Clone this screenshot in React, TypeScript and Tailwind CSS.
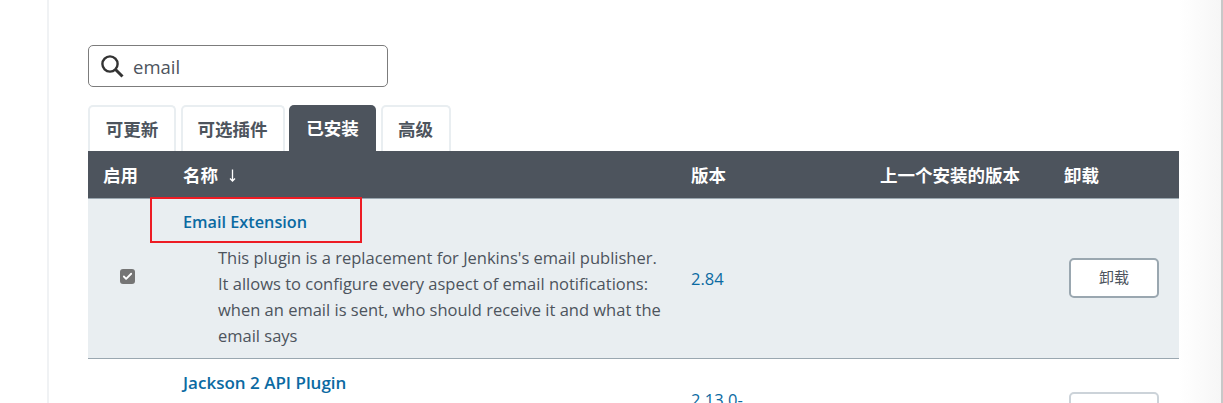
import { Check } from "lucide-react";

const tabs = [
  { label: "可更新", width: "w-[88px]" },
  { label: "可选插件", width: "w-[104px]" },
  { label: "已安装", width: "w-[87px]", active: true },
  { label: "高级", width: "w-[70px]" },
];

const row = "grid grid-cols-[80px_508px_189px_184px_130px]";
const font = "font-['Open_Sans','Noto_Sans_CJK_SC',sans-serif]";

function Tab({ label, width, active }: { label: string; width: string; active?: boolean }) {
  return (
    <div
      className={
        active
          ? `${width} h-[46px] rounded-t-[5px] bg-[#4d545d] text-white font-bold text-[17.5px] flex items-center justify-center`
          : `${width} h-[46px] rounded-t-[5px] border-[2px] border-b-0 border-[#e9eef1] text-[#4d545d] font-bold text-[17.5px] flex items-center justify-center`
      }
    >
      {label}
    </div>
  );
}

function Uninstall({ muted }: { muted?: boolean }) {
  return (
    <button
      className={`w-[90px] h-[40px] rounded-[5px] border-2 bg-white text-[15px] text-[#4d545d] shrink-0 ${
        muted ? "border-[#ccd3d9]" : "border-[#9aa7b0]"
      }`}
    >
      卸载
    </button>
  );
}

export default function App() {
  return (
    <div className={`relative h-[403px] overflow-hidden bg-white ${font}`}>
      <div className="flex h-full">
        <div className="w-[47px] shrink-0" />
        <div className="w-[1132px] shrink-0 border-l-2 border-[#f0f2f4] pl-[39px] pt-[45px]">
          <div className="w-[300px] h-[42px] rounded-[5px] border border-[#7c7c7c] flex items-center pl-[11px] gap-[10px]">
            <svg viewBox="0 0 24 24" className="size-[24px] text-[#333]" fill="none" stroke="currentColor">
              <circle cx="10" cy="10" r="7.6" strokeWidth="2.4" />
              <path d="M15.5 15.5 L22.5 22.5" strokeWidth="3" />
            </svg>
            <span className="text-[18.5px] text-[#4d545d] pt-[2px] -ml-[1px]">email</span>
          </div>

          <div className="mt-[18px] flex gap-[4.5px]">
            {tabs.map((tab) => (
              <Tab key={tab.label} {...tab} />
            ))}
          </div>

          <div className="w-[1091px]">
            <div className={`${row} h-[47px] bg-[#4d545d] text-white font-bold text-[17.5px] items-center`}>
              <div className="pl-[15px] pt-[1px]">启用</div>
              <div className="pl-[15px] pt-[1px] flex items-center gap-[11px]">
                名称
                <svg viewBox="0 0 7 13" className="w-[7px] h-[13px]" fill="none" stroke="currentColor">
                  <path d="M3.5 0.5 V12 M1 9.5 L3.5 12 L6 9.5" strokeWidth="1.3" />
                </svg>
              </div>
              <div className="pl-[15px] pt-[1px]">版本</div>
              <div className="pl-[15px] pt-[1px]">上一个安装的版本</div>
              <div className="pl-[15px] pt-[1px]">卸载</div>
            </div>

            <div className={`${row} h-[161px] bg-[#e9eef1] border-b border-[#9aa7b0] border-t border-t-[#9aa7b0]`}>
              <div className="flex items-center justify-center pb-[4px] pr-[1px]">
                <span className="size-[15px] rounded-[3px] bg-[#757575] flex items-center justify-center">
                  <Check className="size-[11px] text-white" strokeWidth={4} />
                </span>
              </div>
              <div className="pl-[15px] pt-[11px]">
                <div className="text-[16.25px] font-semibold text-[#0b6aa2] leading-[24px]">Email Extension</div>
                <p className="mt-[11px] pl-[35px] text-[16.5px] leading-[26px] text-[#4d545d]">
                  This plugin is a replacement for Jenkins's email publisher.
                  <br />
                  It allows to configure every aspect of email notifications:
                  <br />
                  when an email is sent, who should receive it and what the
                  <br />
                  email says
                </p>
              </div>
              <div className="pl-[15px] pt-[1px] flex items-center text-[16.5px] font-medium text-[#0b6aa2]">2.84</div>
              <div />
              <div className="flex items-center justify-end pr-[20px] pb-[2px]">
                <Uninstall />
              </div>
            </div>

            <div className={row}>
              <div />
              <div className="pl-[15px] pt-[12px] text-[17px] font-semibold text-[#0b6aa2] leading-[24px]">
                Jackson 2 API Plugin
              </div>
              <div className="pl-[15px] pt-[29px] text-[16.5px] font-medium text-[#0b6aa2]">2.13.0-</div>
              <div />
              <div className="flex justify-end pr-[20px] pt-[33px]">
                <Uninstall muted />
              </div>
            </div>
          </div>
        </div>
        <div className="flex-1 bg-gradient-to-r from-white to-[#f6f6f6]" />
        <div className="w-[2px] shrink-0 bg-[#c8c8c8]" />
      </div>

      {/* red annotation box from the original screenshot */}
      <div className="absolute left-[150px] top-[197px] w-[212px] h-[46px] border-2 border-[#ed1c24]" />
    </div>
  );
}
